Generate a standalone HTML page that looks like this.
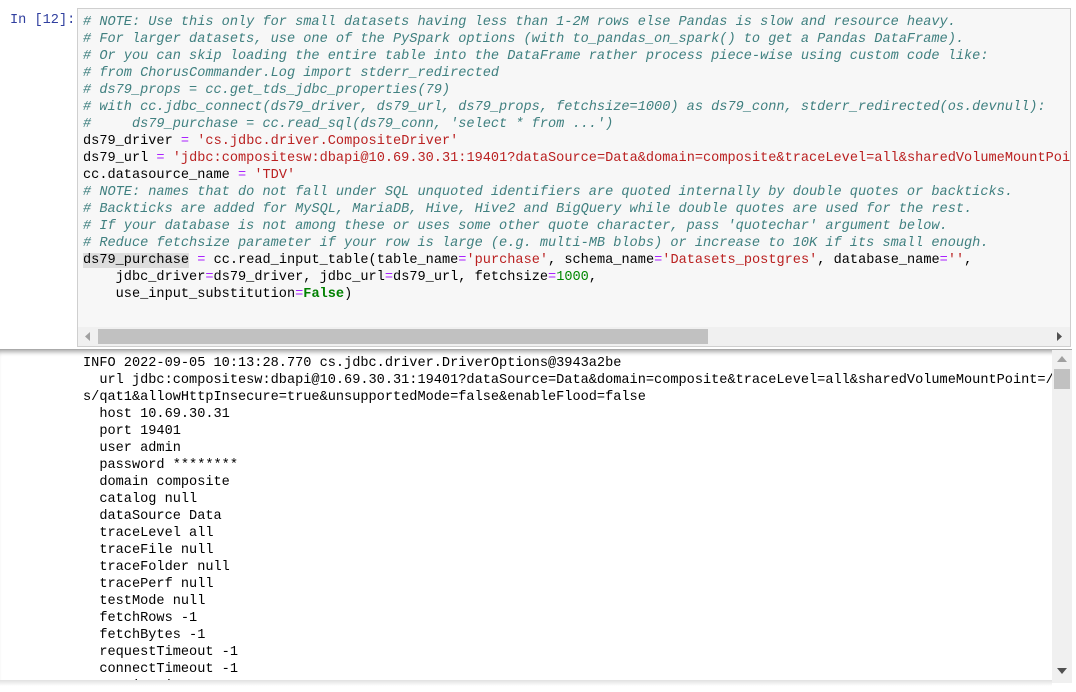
<!DOCTYPE html>
<html><head><style>
body{margin:0;width:1076px;height:692px;background:#fff;overflow:hidden;position:relative;font-family:"Liberation Mono",monospace;}
.pr{position:absolute;left:10px;top:13px;font-size:13.6px;color:#303F9F;}
.in{position:absolute;left:77px;top:8px;width:994px;height:339px;background:#f7f7f7;border:1px solid #cfcfcf;box-sizing:border-box;overflow:hidden;}
pre{margin:0;font-family:"Liberation Mono",monospace;font-size:13.6px;line-height:17px;white-space:pre;}
.code{position:absolute;left:5px;top:5px;color:#000;}
.c{color:#408080;font-style:italic}.s{color:#BA2121}.o{color:#AA22FF}.n{color:#080}.k{color:#008000;font-weight:bold}
.hl{background:#ddd}
.hs{position:absolute;left:0;right:0;bottom:0;height:19px;background:#f0f0f0;}
.hs .th{position:absolute;left:20px;top:2px;width:610px;height:15px;background:#c1c1c1;}
.out{position:absolute;left:0;top:349px;width:1072px;height:333px;overflow:hidden;border-top:1px solid #aaa;box-shadow:inset 0 5px 5px -3px rgba(0,0,0,.35);}
.otext{position:absolute;left:83px;top:5px;color:#000;}
.vs{position:absolute;left:1052px;top:0;width:20px;height:333px;background:#f0f0f0;}
.vs .th{position:absolute;left:2px;top:19px;width:16px;height:20px;background:#c1c1c1;}
.shb{position:absolute;left:0;top:680px;width:1052px;height:6px;background:linear-gradient(#e0e0e0,#fff);}
</style></head><body>
<div class="pr">In [12]:</div>
<div class="in">
<pre class="code"><span class="c"># NOTE: Use this only for small datasets having less than 1-2M rows else Pandas is slow and resource heavy.
# For larger datasets, use one of the PySpark options (with to_pandas_on_spark() to get a Pandas DataFrame).
# Or you can skip loading the entire table into the DataFrame rather process piece-wise using custom code like:
# from ChorusCommander.Log import stderr_redirected
# ds79_props = cc.get_tds_jdbc_properties(79)
# with cc.jdbc_connect(ds79_driver, ds79_url, ds79_props, fetchsize=1000) as ds79_conn, stderr_redirected(os.devnull):
#     ds79_purchase = cc.read_sql(ds79_conn, 'select * from ...')</span>
ds79_driver <span class="o">=</span> <span class="s">'cs.jdbc.driver.CompositeDriver'</span>
ds79_url <span class="o">=</span> <span class="s">'jdbc:compositesw:dbapi@10.69.30.31:19401?dataSource=Data&amp;domain=composite&amp;traceLevel=all&amp;sharedVolumeMountPoint=/mnt/td'</span>
cc.datasource_name <span class="o">=</span> <span class="s">'TDV'</span>
<span class="c"># NOTE: names that do not fall under SQL unquoted identifiers are quoted internally by double quotes or backticks.
# Backticks are added for MySQL, MariaDB, Hive, Hive2 and BigQuery while double quotes are used for the rest.
# If your database is not among these or uses some other quote character, pass 'quotechar' argument below.
# Reduce fetchsize parameter if your row is large (e.g. multi-MB blobs) or increase to 10K if its small enough.</span>
<span class="hl">ds79_purchase</span> <span class="o">=</span> cc.read_input_table(table_name<span class="o">=</span><span class="s">'purchase'</span>, schema_name<span class="o">=</span><span class="s">'Datasets_postgres'</span>, database_name<span class="o">=</span><span class="s">''</span>,
    jdbc_driver<span class="o">=</span>ds79_driver, jdbc_url<span class="o">=</span>ds79_url, fetchsize<span class="o">=</span><span class="n">1000</span>,
    use_input_substitution<span class="o">=</span><span class="k">False</span>)</pre>
<div class="hs"><div class="th"></div>
<svg style="position:absolute;left:6px;top:5px" width="8" height="9"><path d="M6 0 L1 4.5 L6 9Z" fill="#a0a0a0"/></svg>
<svg style="position:absolute;right:6px;top:5px" width="8" height="9"><path d="M1 0 L6 4.5 L1 9Z" fill="#505050"/></svg>
</div>
</div>
<div class="out">
<pre class="otext">INFO 2022-09-05 10:13:28.770 cs.jdbc.driver.DriverOptions@3943a2be
  url jdbc:compositesw:dbapi@10.69.30.31:19401?dataSource=Data&amp;domain=composite&amp;traceLevel=all&amp;sharedVolumeMountPoint=/mnt/td
s/qat1&amp;allowHttpInsecure=true&amp;unsupportedMode=false&amp;enableFlood=false
  host 10.69.30.31
  port 19401
  user admin
  password ********
  domain composite
  catalog null
  dataSource Data
  traceLevel all
  traceFile null
  traceFolder null
  tracePerf null
  testMode null
  fetchRows -1
  fetchBytes -1
  requestTimeout -1
  connectTimeout -1
  sessionTimeout -1</pre>
<div class="vs"><div class="th"></div>
<svg style="position:absolute;left:5px;top:6px" width="10" height="6"><path d="M0 6 L5 0 L10 6Z" fill="#a0a0a0"/></svg>
<svg style="position:absolute;left:5px;top:318px" width="10" height="6"><path d="M0 0 L5 6 L10 0Z" fill="#505050"/></svg>
</div>
</div>
<div class="shb"></div>
</body></html>
